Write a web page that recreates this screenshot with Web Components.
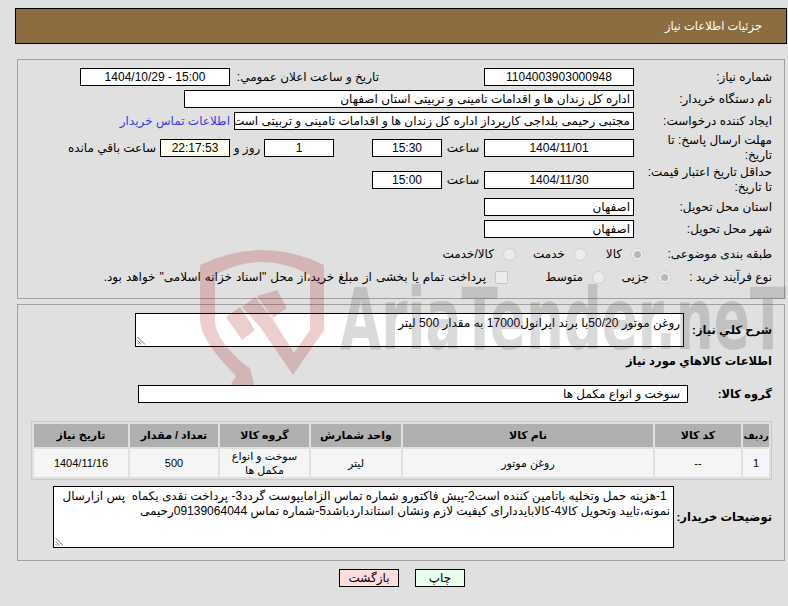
<!DOCTYPE html>
<html lang="fa" dir="rtl">
<head>
<meta charset="utf-8">
<title>جزئیات اطلاعات نیاز</title>
<style>
  html, body { margin: 0; padding: 0; background: #e0e0e0; }
  body {
    width: 788px; height: 606px; overflow: hidden; position: relative;
    font: 12px "Liberation Sans", "DejaVu Sans", sans-serif; color: #000;
  }
</style>
</head>
<body>
<page-header>جزئیات اطلاعات نیاز</page-header>

<form-panel style="height:230px; margin-top:15px; padding-top:8px">
  <field-row label="شماره نیاز:">
    <text-box w="150" center>1104003903000948</text-box>
    <plain-label style="width:145px; margin-right:105px">تاریخ و ساعت اعلان عمومي:</plain-label>
    <text-box w="150" center style="margin-right:4px">15:00 - 1404/10/29</text-box>
  </field-row>
  <field-row label="نام دستگاه خریدار:" style="margin-top:4px">
    <text-box w="450">اداره کل زندان ها و اقدامات تامینی و تربیتی استان اصفهان</text-box>
  </field-row>
  <field-row label="ایجاد کننده درخواست:" style="margin-top:4px">
    <text-box w="400">مجتبی رحیمی بلداجی کارپرداز اداره کل زندان ها و اقدامات تامینی و تربیتی است</text-box>
    <a-link style="margin-right:4px">اطلاعات تماس خریدار</a-link>
  </field-row>
  <field-row label="مهلت ارسال پاسخ: تا تاریخ:" tall style="margin-top:3px">
    <text-box w="150" center>1404/11/01</text-box>
    <plain-label style="width:42px; text-align:center">ساعت</plain-label>
    <text-box w="70" center>15:30</text-box>
    <plain-label style="width:38px"></plain-label>
    <text-box w="70" center>1</text-box>
    <plain-label style="width:34px; text-align:center">روز و</plain-label>
    <text-box w="70" center warm>22:17:53</text-box>
    <plain-label style="margin-right:4px">ساعت باقي مانده</plain-label>
  </field-row>
  <field-row label="حداقل تاریخ اعتبار قیمت: تا تاریخ:" tall style="margin-top:2px">
    <text-box w="150" center>1404/11/30</text-box>
    <plain-label style="width:42px; text-align:center">ساعت</plain-label>
    <text-box w="70" center>15:00</text-box>
  </field-row>
  <field-row label="استان محل تحویل:" style="margin-top:3px">
    <text-box w="150">اصفهان</text-box>
  </field-row>
  <field-row label="شهر محل تحویل:" style="margin-top:4px">
    <text-box w="150">اصفهان</text-box>
  </field-row>
  <field-row label="طبقه بندی موضوعی:" style="margin-top:7px">
    <radio-item on style="width:57px; margin-right:-10px">کالا</radio-item>
    <radio-item style="width:71px">خدمت</radio-item>
    <radio-item>کالا/خدمت</radio-item>
  </field-row>
  <field-row label="نوع فرآیند خرید :" style="margin-top:5px">
    <radio-item on style="width:66px; margin-right:-37px">جزیی</radio-item>
    <radio-item style="width:97px">متوسط</radio-item>
    <radio-item square style="word-spacing:.7px">پرداخت تمام یا بخشی از مبلغ خرید،از محل "اسناد خزانه اسلامی" خواهد بود.</radio-item>
  </field-row>
</form-panel>

<form-panel style="height:247px; margin-top:5px; padding-top:8px">
  <field-row label="شرح کلي نياز:" bold narrow>
    <note-box w="549" h="34">روغن موتور 50/20با برند ایرانول17000 به مقدار 500 لیتر</note-box>
  </field-row>
  <section-title>اطلاعات کالاهاي مورد نياز</section-title>
  <field-row label="گروه کالا:" bold group style="margin-top:16px">
    <text-box w="550" pad="7">سوخت و انواع مکمل ها</text-box>
  </field-row>
  <goods-table></goods-table>
  <field-row label="توضیحات خریدار:" bold notes style="margin-top:6px">
    <note-box w="621" h="62"> 1-هزینه حمل وتخلیه باتامین کننده است2-پیش فاکتورو شماره تماس الزامایپوست گردد3- پرداخت نقدی یکماه  پس ازارسال نمونه،تایید وتحویل کالا4-کالابایددارای کیفیت لازم ونشان استانداردباشد5-شماره تماس 09139064044رحیمی</note-box>
  </field-row>
</form-panel>

<button-bar>
  <page-button tone="print">چاپ</page-button>
  <page-button tone="back">بازگشت</page-button>
</button-bar>

<aria-watermark></aria-watermark>

<script>
// helper: every element gets an open shadow root from a string
class Base extends HTMLElement {
  constructor() {
    super();
    this.attachShadow({ mode: 'open' });
  }
  connectedCallback() {
    this.shadowRoot.innerHTML = this.markup();
  }
}

class PageHeader extends Base {
  markup() {
    return `<style>
      :host { display:flex; align-items:center; box-sizing:border-box; height:36px;
        margin:8px 1px 0 0; width:772px; padding:0 24px 0 0;
        background:#8c6d42; border:1px solid #000; color:#fff; font-size:11.500px; }
    </style><slot></slot>`;
  }
}

class FormPanel extends Base {
  markup() {
    return `<style>
      :host { display:block; box-sizing:content-box; width:766px; margin-right:3px;
        border:1px solid #a0a0a0; }
    </style><slot></slot>`;
  }
}

class FieldRow extends Base {
  markup() {
    const tall = this.hasAttribute('tall');
    const bold = this.hasAttribute('bold');
    let col = 138;
    if (this.hasAttribute('narrow')) col = 88;
    if (this.hasAttribute('group')) col = 84;
    if (this.hasAttribute('notes')) col = 98;
    return `<style>
      :host { display:flex; align-items:center; min-height:18px; padding-right:12px;
        ${tall ? 'height:30px;' : ''} }
      .lab { flex:none; width:${col}px; box-sizing:border-box; padding-left:${bold ? 0 : 8}px;
        line-height:15px; ${bold ? 'font-weight:bold; font-size:11.500px; white-space:nowrap;' : ''} }
      .rest { display:flex; align-items:center; flex:1; min-width:0; }
    </style><div class="lab">${this.getAttribute('label')}</div><div class="rest"><slot></slot></div>`;
  }
}

class TextBox extends Base {
  markup() {
    const w = this.getAttribute('w');
    const center = this.hasAttribute('center');
    const warm = this.hasAttribute('warm');
    const pad = this.getAttribute('pad') || 3;
    return `<style>
      :host { display:block; flex:none; box-sizing:border-box; width:${w}px; height:18px;
        border:1px solid #000; background:${warm ? '#fffff0' : '#fff'};
        line-height:16px; padding:0 ${pad}px; overflow:hidden; white-space:nowrap;
        text-align:${center ? 'center' : 'right'}; }
    </style><slot></slot>`;
  }
}

class NoteBox extends Base {
  markup() {
    const w = this.getAttribute('w');
    const h = this.getAttribute('h');
    return `<style>
      :host { display:block; position:relative; flex:none; box-sizing:border-box; width:${w}px; height:${h}px;
        border:1px solid #000; background:#fff; padding:2px 3px; line-height:15px; white-space:pre-wrap; overflow:hidden; }
      svg { position:absolute; left:1px; bottom:1px; }
    </style><slot></slot>
    <svg width="9" height="9" viewBox="0 0 9 9"><path d="M0.5 1 8 8.5M0.5 4.500 4.500 8.500M0.5 7 2 8.500" stroke="#777" fill="none"/></svg>`;
  }
}

class PlainLabel extends Base {
  markup() {
    return `<style>
      :host { display:block; flex:none; white-space:nowrap; }
    </style><slot></slot>`;
  }
}

class ALink extends Base {
  markup() {
    return `<style>
      :host { display:block; flex:none; color:#3a3ae0; white-space:nowrap; }
    </style><slot></slot>`;
  }
}

class RadioItem extends Base {
  markup() {
    const square = this.hasAttribute('square');
    const on = this.hasAttribute('on');
    const mark = square
      ? '<span class="sq"></span>'
      : `<span class="ra">${on ? '<i></i>' : ''}</span>`;
    return `<style>
      :host { display:flex; align-items:center; flex:none; white-space:nowrap; }
      .ra { flex:none; display:flex; align-items:center; justify-content:center; width:13px; height:13px;
        border-radius:50%; background:#ececec; border:1px solid #d0d0d0; box-sizing:border-box; margin-left:9px; }
      .ra i { display:block; width:7px; height:7px; border-radius:50%; background:#b8b8b8; }
      .sq { flex:none; width:11px; height:11px; border:1px solid #c6c6c6; border-radius:2px; background:#ececec; margin-left:9px; }
    </style>${mark}<slot></slot>`;
  }
}

class SectionTitle extends Base {
  markup() {
    return `<style>
      :host { display:block; font-weight:bold; font-size:11.500px; padding-right:12px; margin-top:6px; line-height:16px; }
    </style><slot></slot>`;
  }
}

class GoodsTable extends Base {
  markup() {
    return `<style>
      :host { display:block; box-sizing:border-box; width:741px; margin:18px 12px 0 0;
        border:1px solid #c8c8c8; padding:2px; }
      .g { display:grid; grid-template-columns:26px 86px 250px 90px 89px 88px 94px; column-gap:2px; row-gap:2px;
        grid-template-rows:23px 28px; }
      .g > div { display:flex; align-items:center; justify-content:center; text-align:center; }
      .h { background:#b0b0b0; font-weight:bold; font-size:11px; white-space:nowrap; }
      .s { font-size:9.500px; }
      .c { background:#f5f5f5; font-size:11px; line-height:14px; }
    </style>
    <div class="g">
      <div class="h s">ردیف</div><div class="h">کد کالا</div><div class="h">نام کالا</div>
      <div class="h">واحد شمارش</div><div class="h">گروه کالا</div><div class="h">تعداد / مقدار</div><div class="h">تاریخ نیاز</div>
      <div class="c">1</div><div class="c">--</div><div class="c">روغن موتور</div>
      <div class="c">لیتر</div><div class="c">سوخت و انواع مکمل ها</div><div class="c">500</div><div class="c">1404/11/16</div>
    </div>`;
  }
}

class ButtonBar extends Base {
  markup() {
    return `<style>
      :host { display:flex; justify-content:center; gap:16px; margin-top:8px; padding-left:16px; box-sizing:border-box; width:788px; }
    </style><slot></slot>`;
  }
}

class PageButton extends Base {
  markup() {
    const back = this.getAttribute('tone') === 'back';
    return `<style>
      :host { display:flex; align-items:center; justify-content:center; box-sizing:border-box;
        width:${back ? 60 : 50}px; height:18px; border:1px solid #000; background:${back ? '#ffdddd' : '#eaffea'}; }
    </style><slot></slot>`;
  }
}

// watermark lies over the form, it is cut at y=386 like the original image
class AriaWatermark extends Base {
  markup() {
    return `<style>
      :host { position:absolute; left:0; top:0; width:788px; height:386px; overflow:hidden; pointer-events:none; direction:ltr; }
      svg { display:block; }
      text { direction:ltr; }
    </style>
    <svg width="788" height="386" viewBox="0 0 788 386">
      <g fill="rgb(160,10,10)" fill-opacity=".2">
        <path d="M200 265Q232 250 262 250Q294 250 324 265V330L293 375L260 327L272 318L294 353L310 330V275Q286 262 262 262Q238 262 215 275V320Q215 340 245 365L250 368L256 392L231 384L236 376Q200 340 200 320Z"/>
        <path d="M226 317 240 307 255 330 242 340Z"/>
        <path d="M242 307 255 297 272 318 260 327Z"/>
        <path d="M257 296 277 290 287 308 273 318Z"/>
      </g>
      <text x="340" y="349" font-family="DejaVu Sans Condensed, DejaVu Sans, sans-serif" font-weight="bold"
        font-size="86" textLength="446" lengthAdjust="spacingAndGlyphs" fill="rgb(70,70,70)" fill-opacity=".2">AriaTender.neT</text>
    </svg>`;
  }
}

customElements.define('page-header', PageHeader);
customElements.define('form-panel', FormPanel);
customElements.define('field-row', FieldRow);
customElements.define('text-box', TextBox);
customElements.define('note-box', NoteBox);
customElements.define('plain-label', PlainLabel);
customElements.define('a-link', ALink);
customElements.define('radio-item', RadioItem);
customElements.define('section-title', SectionTitle);
customElements.define('goods-table', GoodsTable);
customElements.define('button-bar', ButtonBar);
customElements.define('page-button', PageButton);
customElements.define('aria-watermark', AriaWatermark);
</script>
</body>
</html>
